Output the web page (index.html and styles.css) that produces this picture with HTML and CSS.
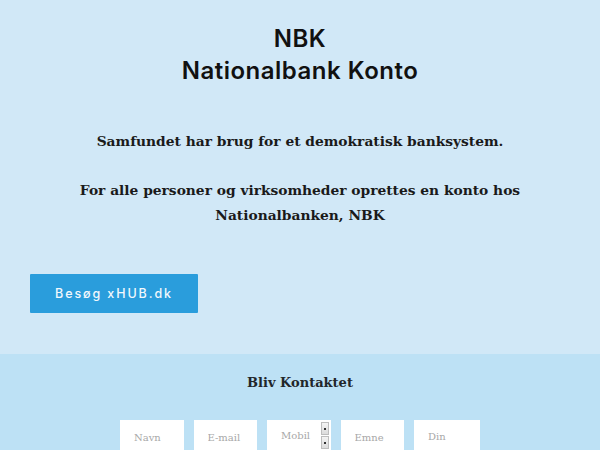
FILE: index.html
```html
<!DOCTYPE html>
<html lang="da">
<head>
<meta charset="utf-8">
<title>NBK Nationalbank Konto</title>
<link rel="stylesheet" href="styles.css">
</head>
<body>
<section class="hero">
  <h1 class="title">NBK<br>Nationalbank Konto</h1>
  <p class="lead">Samfundet har brug for et demokratisk banksystem.</p>
  <p class="lead lead-two">For alle personer og virksomheder oprettes en konto hos<br>Nationalbanken, NBK</p>
  <div class="actions">
    <a class="btn" href="#">Besøg xHUB.dk</a>
  </div>
</section>
<section class="contact">
  <h2 class="contact-title">Bliv Kontaktet</h2>
  <form class="contact-form">
    <input class="field" type="text" placeholder="Navn">
    <input class="field" type="text" placeholder="E-mail">
    <div class="field field-number">
      <span class="ph">Mobil</span>
      <span class="spinner"><span class="spin-btn"></span><span class="spin-btn"></span></span>
    </div>
    <input class="field" type="text" placeholder="Emne">
    <textarea class="field field-msg" placeholder="Din Beskeder"></textarea>
  </form>
</section>
</body>
</html>
```

FILE: styles.css
```css
html, body {
  margin: 0;
  padding: 0;
}
body {
  background: #d1e8f7;
  font-family: "DejaVu Serif", "Liberation Serif", serif;
  color: #1b1b1b;
}
.hero {
  padding: 23px 30px 41px;
  text-align: center;
}
.title {
  margin: 0;
  font-family: Inter, "Noto Sans", sans-serif;
  font-weight: 600;
  font-size: 24px;
  line-height: 32px;
  letter-spacing: 0.5px;
  color: #111;
}
.lead {
  margin: 42px 0 0;
  font-weight: bold;
  font-size: 13.8px;
  line-height: 25px;
  color: #1a1a1a;
}
.lead-two {
  margin-top: 24px;
}
.actions {
  margin-top: 46px;
  display: flex;
}
.btn {
  display: flex;
  align-items: center;
  justify-content: center;
  width: 168px;
  height: 39px;
  background: #2a9ddc;
  color: #f2f8fc;
  font-family: Inter, "Noto Sans", sans-serif;
  font-weight: 500;
  font-size: 12.5px;
  letter-spacing: 1.9px;
  text-decoration: none;
  border-radius: 1px;
}
.contact {
  background: #bde1f5;
  padding: 18px 0 0;
  text-align: center;
  min-height: 96px;
}
.contact-title {
  margin: 0;
  font-size: 13px;
  line-height: 22px;
  font-weight: bold;
  color: #22262a;
}
.contact-form {
  margin-top: 26px;
  display: flex;
  justify-content: center;
  align-items: flex-start;
  gap: 10px;
}
.field {
  box-sizing: border-box;
  width: 63.5px;
  height: 34px;
  margin: 0;
  border: none;
  background: #fff;
  padding: 7px 14px;
  font-family: "DejaVu Serif", "Liberation Serif", serif;
  font-size: 10px;
  line-height: 18px;
  color: #999;
  text-align: left;
  outline: none;
}
.field::placeholder {
  color: #a8a8a8;
}
.field-number {
  position: relative;
}
.ph {
  color: #a8a8a8;
}
.spinner {
  position: absolute;
  top: 2px;
  right: 2px;
  display: flex;
  flex-direction: column;
  gap: 1px;
}
.spin-btn {
  position: relative;
  width: 8px;
  height: 13px;
  background: linear-gradient(#f4f4f4, #dcdcdc);
  border: 1px solid #bdbdbd;
  box-sizing: border-box;
}
.spin-btn::after {
  content: "";
  position: absolute;
  left: 2px;
  top: 5px;
  width: 2px;
  height: 2px;
  background: #333;
}
.field-msg {
  width: 66px;
  height: 60px;
  padding-top: 8px;
  resize: none;
  overflow: hidden;
}
```
